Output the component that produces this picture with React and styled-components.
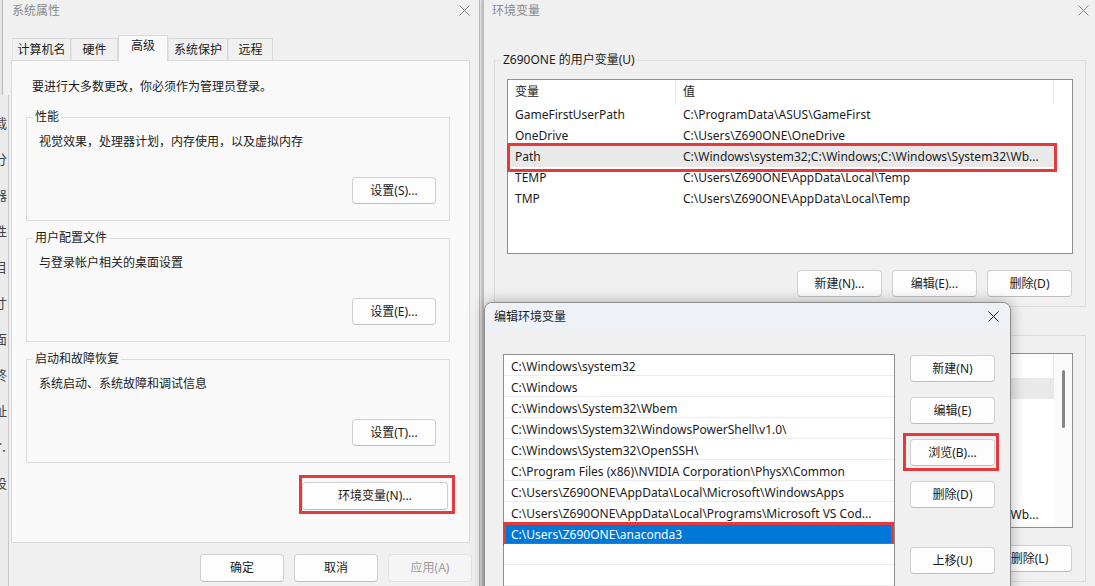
import React from "react";
import styled, { createGlobalStyle } from "styled-components";

const GlobalStyle = createGlobalStyle`
  * { box-sizing: border-box; }
  html, body { margin: 0; padding: 0; overflow: hidden; background: #e6e6e6; }
  body {
    font-family: "Noto Sans", "Noto Sans CJK SC", sans-serif;
    font-size: 12px;
    color: #1b1b1b;
  }
`;

const userVars = [
  ["GameFirstUserPath", "C:\\ProgramData\\ASUS\\GameFirst"],
  ["OneDrive", "C:\\Users\\Z690ONE\\OneDrive"],
  ["Path", "C:\\Windows\\system32;C:\\Windows;C:\\Windows\\System32\\Wb..."],
  ["TEMP", "C:\\Users\\Z690ONE\\AppData\\Local\\Temp"],
  ["TMP", "C:\\Users\\Z690ONE\\AppData\\Local\\Temp"],
];

const sysVars = [
  ["ComSpec", "C:\\Windows\\system32\\cmd.exe"],
  ["configsetroot", "C:\\Windows\\ConfigSetRoot"],
  ["DriverData", "C:\\Windows\\System32\\Drivers\\DriverData"],
  ["NUMBER_OF_PROCESSORS", "24"],
  ["OnlineServices", "Online Services"],
  ["OS", "Windows_NT"],
  ["Path", "C:\\Windows\\system32;C:\\Windows;C:\\Windows\\System32\\Wb..."],
];

const pathItems = [
  "C:\\Windows\\system32",
  "C:\\Windows",
  "C:\\Windows\\System32\\Wbem",
  "C:\\Windows\\System32\\WindowsPowerShell\\v1.0\\",
  "C:\\Windows\\System32\\OpenSSH\\",
  "C:\\Program Files (x86)\\NVIDIA Corporation\\PhysX\\Common",
  "C:\\Users\\Z690ONE\\AppData\\Local\\Microsoft\\WindowsApps",
  "C:\\Users\\Z690ONE\\AppData\\Local\\Programs\\Microsoft VS Cod...",
  "C:\\Users\\Z690ONE\\anaconda3",
  "",
  "",
];

const behindGlyphs = ["载", "分", "器", "性", "目", "寸", "面", "终", "址", "∴", "设"];

const tabs = [
  { label: "计算机名", w: 59 },
  { label: "硬件", w: 47 },
  { label: "高级", w: 50, active: true },
  { label: "系统保护", w: 60 },
  { label: "远程", w: 45 },
];

const CloseIcon = ({ color }) => (
  <svg width="11" height="11" viewBox="0 0 11 11">
    <path d="M0.5 0.5 L10.5 10.5 M10.5 0.5 L0.5 10.5" stroke={color} strokeWidth="1" fill="none" />
  </svg>
);

export default () => {
  return (
    <Desktop>
      <GlobalStyle />

      <Window $x={2} $y={-1} $w={478} $h={600} $z={1}>
        <TitleBar $h={21} $pl={9} $pr={9}>
          <span>系统属性</span>
          <CloseIcon color="#8a8a8a" />
        </TitleBar>
        <TabStrip>
          {tabs.map((t) => (
            <Tab key={t.label} $w={t.w} $active={t.active}>
              {t.label}
            </Tab>
          ))}
        </TabStrip>
        <TabPanel>
          <Notice>要进行大多数更改，你必须作为管理员登录。</Notice>
          <Group>
            <Legend>性能</Legend>
            <GroupBody>
              <Desc>视觉效果，处理器计划，内存使用，以及虚拟内存</Desc>
              <ButtonRow>
                <Button $w={84} $h={27}>设置(S)...</Button>
              </ButtonRow>
            </GroupBody>
          </Group>
          <Group $gap={9}>
            <Legend>用户配置文件</Legend>
            <GroupBody>
              <Desc>与登录帐户相关的桌面设置</Desc>
              <ButtonRow>
                <Button $w={84} $h={27}>设置(E)...</Button>
              </ButtonRow>
            </GroupBody>
          </Group>
          <Group $gap={9}>
            <Legend>启动和故障恢复</Legend>
            <GroupBody>
              <Desc>系统启动、系统故障和调试信息</Desc>
              <ButtonRow>
                <Button $w={84} $h={27}>设置(T)...</Button>
              </ButtonRow>
            </GroupBody>
          </Group>
          <EnvRow>
            <Button $w={146} $h={28}>
              环境变量(N)...
              <Mark $t={8} $r={8} $b={5} $l={4} />
            </Button>
          </EnvRow>
        </TabPanel>
        <DialogButtons>
          <Button $w={84} $h={28}>确定</Button>
          <Button $w={84} $h={28}>取消</Button>
          <Button $w={84} $h={28} $disabled>应用(A)</Button>
        </DialogButtons>
      </Window>

      <Window $x={483} $y={-1} $w={614} $h={600} $z={2} $shadow="-1px 0 3px rgba(0,0,0,0.28)">
        <TitleBar $h={21} $pl={8} $pr={7}>
          <span>环境变量</span>
          <CloseIcon color="#8a8a8a" />
        </TitleBar>
        <EnvContent>
          <Group>
            <Legend>Z690ONE 的用户变量(U)</Legend>
            <VarBody>
              <VarList>
                <HeadRow>
                  <HeadCell $w={168}>变量</HeadCell>
                  <HeadCell $w={378}>值</HeadCell>
                  <Filler />
                </HeadRow>
                {userVars.map(([name, value]) => (
                  <VarRow key={name} $selected={name === "Path"}>
                    <Cell $w={168}>{name}</Cell>
                    <Cell $w={378}>{value}</Cell>
                    {name === "Path" && <Mark $t={3} $r={3} $b={5} $l={1} />}
                  </VarRow>
                ))}
              </VarList>
              <ListButtons>
                <Button $w={85} $h={27}>新建(N)...</Button>
                <Button $w={85} $h={27}>编辑(E)...</Button>
                <Button $w={85} $h={27}>删除(D)</Button>
              </ListButtons>
            </VarBody>
          </Group>
          <Group $gap={20}>
            <Legend>系统变量(S)</Legend>
            <VarBody $top={10}>
              <VarList>
                <ListInner>
                  <ListRows>
                    <HeadRow>
                      <HeadCell $w={168}>变量</HeadCell>
                      <HeadCell $w={378}>值</HeadCell>
                    </HeadRow>
                    {sysVars.map(([name, value], i) => (
                      <VarRow key={name} $selected={i === 0}>
                        <Cell $w={168}>{name}</Cell>
                        <Cell $w={378}>{value}</Cell>
                      </VarRow>
                    ))}
                  </ListRows>
                  <ScrollTrack>
                    <ScrollThumb />
                  </ScrollTrack>
                </ListInner>
              </VarList>
              <ListButtons $top={17}>
                <Button $w={85} $h={27}>新建(W)...</Button>
                <Button $w={85} $h={27}>编辑(I)...</Button>
                <Button $w={85} $h={27}>删除(L)</Button>
              </ListButtons>
            </VarBody>
          </Group>
        </EnvContent>
      </Window>

      <Window
        $x={484}
        $y={302}
        $w={527}
        $h={300}
        $z={3}
        $round
        $border="#8e8e8e"
        $shadow="0 0 14px rgba(0,0,0,0.3)"
      >
        <TitleBar $h={27} $pl={9} $pr={11} $active>
          <span>编辑环境变量</span>
          <CloseIcon color="#1b1b1b" />
        </TitleBar>
        <EditBody>
          <PathList>
            {pathItems.map((p, i) => (
              <PathRow key={i} $selected={i === 8}>
                {p}
                {i === 8 && <Mark $t={1} $r={0} $b={3} $l={1} />}
              </PathRow>
            ))}
          </PathList>
          <SideButtons>
            <Button $w={85} $h={27}>新建(N)</Button>
            <Button $w={85} $h={27}>编辑(E)</Button>
            <Button $w={85} $h={27}>
              浏览(B)...
              <Mark $t={7} $r={5} $b={6} $l={8} />
            </Button>
            <Button $w={85} $h={27}>删除(D)</Button>
            <Button $w={85} $h={27} $spaced>上移(U)</Button>
          </SideButtons>
        </EditBody>
      </Window>

      <Behind>
        {behindGlyphs.map((g, i) => (
          <BehindGlyph key={i}>{g}</BehindGlyph>
        ))}
      </Behind>
    </Desktop>
  );
};

const Desktop = styled.div`
  position: relative;
  width: 1095px;
  height: 586px;
  overflow: hidden;
  background: #e6e6e6;
`;

const Window = styled.div`
  position: absolute;
  left: ${(p) => p.$x}px;
  top: ${(p) => p.$y}px;
  width: ${(p) => p.$w}px;
  height: ${(p) => p.$h}px;
  z-index: ${(p) => p.$z};
  display: flex;
  flex-direction: column;
  background: #f0f0f0;
  border: 1px solid ${(p) => p.$border || "#b9b9b9"};
  border-radius: ${(p) => (p.$round ? "8px 8px 0 0" : "0")};
  box-shadow: ${(p) => p.$shadow || "none"};
`;

const TitleBar = styled.div`
  flex-shrink: 0;
  display: flex;
  align-items: center;
  justify-content: space-between;
  height: ${(p) => p.$h}px;
  padding: 0 ${(p) => p.$pr}px 0 ${(p) => p.$pl}px;
  color: ${(p) => (p.$active ? "#1b1b1b" : "#8a8a8a")};
  background: ${(p) => (p.$active ? "#eef2f6" : "#f0f0f0")};
  border-radius: ${(p) => (p.$active ? "8px 8px 0 0" : "0")};
  line-height: 16px;
  & svg {
    display: block;
  }
`;

const TabStrip = styled.div`
  position: relative;
  z-index: 1;
  display: flex;
  align-items: flex-end;
  height: 26px;
  margin: 14px 0 -1px;
  padding-left: 9px;
`;

const Tab = styled.div`
  width: ${(p) => p.$w}px;
  height: ${(p) => (p.$active ? 26 : 22)}px;
  margin-bottom: ${(p) => (p.$active ? 0 : 1)}px;
  padding-top: ${(p) => (p.$active ? 2 : 3)}px;
  text-align: center;
  line-height: 16px;
  background: ${(p) => (p.$active ? "#f9f9f9" : "#f0f0f0")};
  border: 1px solid #d9d9d9;
  border-bottom: none;
  border-left-color: ${(p) => (p.$active ? "#d9d9d9" : "#e4e4e4")};
`;

const TabPanel = styled.div`
  flex-shrink: 0;
  display: flex;
  flex-direction: column;
  width: 459px;
  height: 483px;
  margin-left: 8px;
  padding: 18px 19px 0 14px;
  background: #f9f9f9;
  border: 1px solid #d9d9d9;
`;

const Notice = styled.div`
  line-height: 16px;
  margin: 0 0 14px 6px;
`;

const Group = styled.fieldset`
  margin: ${(p) => p.$gap || 0}px 0 0;
  padding: 0;
  min-width: 0;
  border: 1px solid #dcdcdc;
`;

const Legend = styled.legend`
  margin-left: 6px;
  padding: 0 2px;
  line-height: 16px;
  font-size: 12px;
`;

const GroupBody = styled.div`
  padding: 9px 13px 16px 12px;
`;

const Desc = styled.div`
  line-height: 16px;
`;

const ButtonRow = styled.div`
  display: flex;
  justify-content: flex-end;
  margin-top: 27px;
`;

const Button = styled.div`
  position: relative;
  flex-shrink: 0;
  display: flex;
  align-items: center;
  justify-content: center;
  width: ${(p) => p.$w}px;
  height: ${(p) => p.$h}px;
  margin-top: ${(p) => (p.$spaced ? 24 : 0)}px;
  background: ${(p) => (p.$disabled ? "#f5f5f5" : "#fdfdfd")};
  color: ${(p) => (p.$disabled ? "#9d9d9d" : "#1b1b1b")};
  border: 1px solid ${(p) => (p.$disabled ? "#e3e3e3" : "#d0d0d0")};
  border-bottom-color: ${(p) => (p.$disabled ? "#e3e3e3" : "#bdbdbd")};
  border-radius: 4px;
  line-height: 16px;
  white-space: nowrap;
`;

const Mark = styled.span`
  position: absolute;
  top: ${(p) => -p.$t}px;
  right: ${(p) => -p.$r}px;
  bottom: ${(p) => -p.$b}px;
  left: ${(p) => -p.$l}px;
  border: 3px solid #e5393b;
  pointer-events: none;
`;

const EnvRow = styled.div`
  display: flex;
  justify-content: flex-end;
  margin: 19px 2px 0 0;
`;

const DialogButtons = styled.div`
  display: flex;
  justify-content: flex-end;
  gap: 10px;
  margin-top: 11px;
  padding-right: 7px;
`;

const EnvContent = styled.div`
  display: flex;
  flex-direction: column;
  padding: 31px 10px 0 10px;
`;

const VarBody = styled.div`
  padding: ${(p) => p.$top || 11}px 12px 9px 12px;
`;

const VarList = styled.div`
  height: 175px;
  background: #fff;
  border: 1px solid #8f8f8f;
`;

const ListInner = styled.div`
  display: flex;
  height: 100%;
`;

const ListRows = styled.div`
  width: 546px;
`;

const HeadRow = styled.div`
  display: flex;
  height: 24px;
`;

const HeadCell = styled.div`
  width: ${(p) => p.$w}px;
  padding-left: 7px;
  line-height: 24px;
  border-right: 1px solid #e5e5e5;
`;

const Filler = styled.div`
  flex: 1;
`;

const VarRow = styled.div`
  position: relative;
  display: flex;
  width: 546px;
  height: 21px;
  background: ${(p) => (p.$selected ? "#e9e9e9" : "transparent")};
`;

const Cell = styled.div`
  width: ${(p) => p.$w}px;
  padding-left: 7px;
  line-height: 21px;
  white-space: nowrap;
  overflow: hidden;
  text-overflow: ellipsis;
`;

const ScrollTrack = styled.div`
  flex: 1;
  display: flex;
  justify-content: center;
  padding-top: 16px;
  background: #fafafa;
`;

const ScrollThumb = styled.div`
  width: 3px;
  height: 58px;
  border-radius: 2px;
  background: #858585;
`;

const ListButtons = styled.div`
  display: flex;
  justify-content: flex-end;
  gap: 10px;
  margin: ${(p) => p.$top || 16}px 1px 0 0;
`;

const EditBody = styled.div`
  display: flex;
  align-items: flex-start;
  gap: 15px;
  padding: 24px 0 0 18px;
  background: #f0f0f0;
  flex: 1;
`;

const PathList = styled.div`
  width: 392px;
  height: 260px;
  background: #fff;
  border: 1px solid #8f8f8f;
`;

const PathRow = styled.div`
  position: relative;
  height: 21px;
  padding: 2px 0 0 7px;
  line-height: 19px;
  white-space: nowrap;
  border-bottom: 1px solid #ececec;
  background: ${(p) => (p.$selected ? "#0078d7" : "#fff")};
  color: ${(p) => (p.$selected ? "#fff" : "#1b1b1b")};
`;

const SideButtons = styled.div`
  display: flex;
  flex-direction: column;
  gap: 15px;
  padding-top: 1px;
`;

const Behind = styled.div`
  position: absolute;
  left: 0;
  top: 95px;
  z-index: 4;
  width: 9px;
  height: 491px;
  overflow: hidden;
  background: #ebebeb;
  border-right: 1px solid #c9c9c9;
  padding-top: 20px;
`;

const BehindGlyph = styled.div`
  margin-left: -6px;
  height: 36px;
  line-height: 16px;
  font-size: 13px;
  color: #444;
`;
